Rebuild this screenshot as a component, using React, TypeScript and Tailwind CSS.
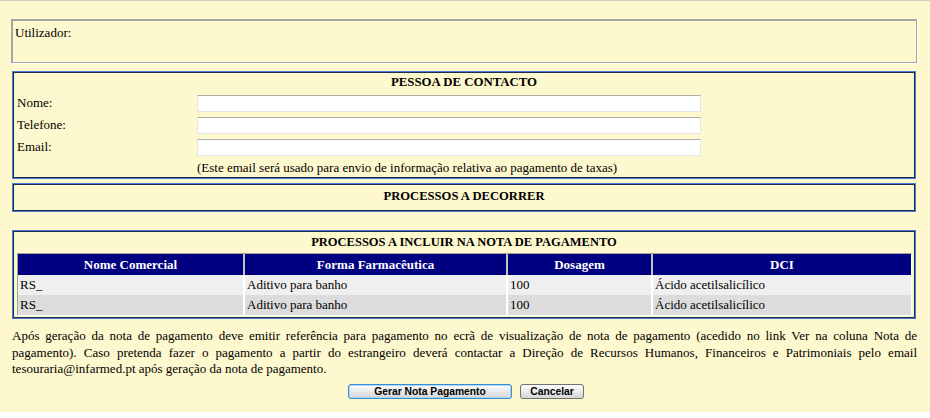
import React from "react";

const serif = { fontFamily: '"Liberation Serif", "Times New Roman", serif' };
const sans = { fontFamily: '"Liberation Sans", Arial, sans-serif' };

function BlueBox({ className = "", children }: { className?: string; children: React.ReactNode }) {
  return (
    <div className={"ml-[12px] w-[904px] border border-[#4b7bd0] " + className}>
      <div className="h-full border border-[#1c2c4c]">{children}</div>
    </div>
  );
}

function Field({ label }: { label: string }) {
  return (
    <div className="flex h-[22px] items-center">
      <div className="w-[183px] pl-[3px]">{label}</div>
      <div className="h-[17px] w-[504px] border border-[#e2e6ec] border-t-[#ababab] bg-white" />
    </div>
  );
}

const rows = [
  { nome: "RS_", forma: "Aditivo para banho", dos: "100", dci: "Ácido acetilsalicílico", bg: "bg-[#efefef]" },
  { nome: "RS_", forma: "Aditivo para banho", dos: "100", dci: "Ácido acetilsalicílico", bg: "bg-[#dcdcdc]" },
];

export default function App() {
  return (
    <div className="h-[418px] w-[930px] bg-white text-[13px] text-black" style={serif}>
      <div className="h-[412px] border-t border-[#cfcfcf] bg-[#fef8ce] pt-[18px]">
        {/* Utilizador */}
        <div className="ml-[11px] h-[45px] w-[907px] border-b border-r border-white">
          <div className="h-full border-b border-l-2 border-r border-t-2 border-[#a5a5a5] pl-[2px] pt-[4px] leading-[15px]">
            Utilizador:
          </div>
        </div>

        {/* Pessoa de contacto */}
        <BlueBox className="mt-[7px] h-[108px]">
          <div className="flex h-[19px] items-center justify-center text-[12.8px] font-bold">PESSOA DE CONTACTO</div>
          <Field label="Nome:" />
          <Field label="Telefone:" />
          <Field label="Email:" />
          <div className="flex h-[20px] items-center pl-[183px]">
            (Este email será usado para envio de informação relativa ao pagamento de taxas)
          </div>
        </BlueBox>

        {/* Processos a decorrer */}
        <BlueBox className="mt-[4px] h-[29px]">
          <div className="flex h-full items-center justify-center pb-[2px] text-[12.6px] font-bold">
            PROCESSOS A DECORRER
          </div>
        </BlueBox>

        {/* Processos a incluir */}
        <BlueBox className="mt-[18px] h-[89px]">
          <div className="flex h-[21px] items-center justify-center text-[12.5px] font-bold">
            PROCESSOS A INCLUIR NA NOTA DE PAGAMENTO
          </div>
          <div className="ml-[3px] w-[895px] border border-[#a0a0a0] border-b-white border-r-white">
            <div className="flex h-[21px] gap-[2px] bg-[#c4c4c4] font-bold text-white">
              <div className="flex w-[225px] items-center justify-center bg-[#000080]">Nome Comercial</div>
              <div className="flex w-[261px] items-center justify-center bg-[#000080]">Forma Farmacêutica</div>
              <div className="flex w-[143px] items-center justify-center bg-[#000080]">Dosagem</div>
              <div className="flex w-[258px] items-center justify-center bg-[#000080]">DCI</div>
            </div>
            {rows.map((r, i) => (
              <div key={i} className="flex h-[20px] gap-[2px] bg-white">
                <div className={"flex w-[225px] items-center pl-[2px] " + r.bg}>{r.nome}</div>
                <div className={"flex w-[261px] items-center pl-[2px] " + r.bg}>{r.forma}</div>
                <div className={"flex w-[143px] items-center pl-[2px] " + r.bg}>{r.dos}</div>
                <div className={"flex w-[258px] items-center pl-[2px] " + r.bg}>{r.dci}</div>
              </div>
            ))}
          </div>
        </BlueBox>

        {/* Paragraph */}
        <p className="ml-[12px] mt-[9px] w-[905px] text-justify leading-[16.5px]">
          Após geração da nota de pagamento deve emitir referência para pagamento no ecrã de visualização de nota de
          pagamento (acedido no link Ver na coluna Nota de pagamento). Caso pretenda fazer o pagamento a partir do
          estrangeiro deverá contactar a Direção de Recursos Humanos, Financeiros e Patrimoniais pelo email
          tesouraria@infarmed.pt após geração da nota de pagamento.
        </p>

        {/* Buttons */}
        <div className="mt-[6px] flex justify-center gap-[8px] pl-[2px]" style={sans}>
          <button className="h-[15px] w-[164px] rounded-[3px] border border-[#3c8ad0] bg-gradient-to-b from-[#fdfdfd] to-[#d6d6d6] p-0 text-[10.3px] font-bold leading-[13px] text-black shadow-[inset_0_0_0_1px_#a8d8f8]">
            Gerar Nota Pagamento
          </button>
          <button className="h-[15px] w-[64px] rounded-[3px] border border-[#707070] bg-gradient-to-b from-[#fdfdfd] to-[#d6d6d6] p-0 text-[10.3px] font-bold leading-[13px] text-black">
            Cancelar
          </button>
        </div>
      </div>
    </div>
  );
}
